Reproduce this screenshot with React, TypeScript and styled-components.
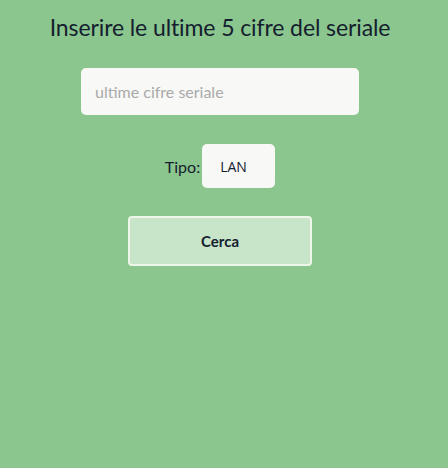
import styled, { createGlobalStyle } from 'styled-components';

const GlobalStyle = createGlobalStyle`
    html, body {
        margin: 0;
        padding: 0;
        background: #8bc68e;
    }
    body {
        font-family: Lato, "Open Sans", sans-serif;
        color: #14202e;
    }
`;

const Page = styled.div`
    min-height: 468px;
    display: flex;
    flex-direction: column;
    align-items: center;
    padding: 12px 8px 0 0;
    box-sizing: border-box;
`;

const Title = styled.h1`
    margin: 0;
    font-size: 23px;
    font-weight: 400;
    line-height: 30px;
    letter-spacing: -0.1px;
`;

const SerialInput = styled.input`
    margin-top: 26px;
    width: 278px;
    height: 47px;
    box-sizing: border-box;
    border: none;
    border-radius: 5px;
    background: #f8f8f7;
    padding: 0 14px;
    font-family: Lato, sans-serif;
    font-size: 16px;
    color: #14202e;
    outline: none;
    &::placeholder {
        color: #a9aaa9;
    }
`;

const TypeRow = styled.div`
    margin-top: 29px;
    display: flex;
    align-items: center;
    gap: 2px;
    font-size: 16px;
`;

const TypeSelect = styled.div`
    width: 73px;
    height: 44px;
    box-sizing: border-box;
    border-radius: 5px;
    background: #f8f8f7;
    display: flex;
    align-items: center;
    padding-left: 18px;
    font-family: "Open Sans", sans-serif;
    font-size: 14px;
`;

const SearchButton = styled.button`
    margin-top: 28px;
    width: 184px;
    height: 50px;
    box-sizing: border-box;
    border: 2px solid #eef6ea;
    border-radius: 4px;
    background: #c8e4c9;
    font-family: Lato, sans-serif;
    font-weight: 700;
    font-size: 15px;
    color: #14202e;
    cursor: pointer;
`;

const App = () => {
    return (
        <>
            <GlobalStyle />
            <Page>
                <Title>Inserire le ultime 5 cifre del seriale</Title>
                <SerialInput placeholder="ultime cifre seriale" />
                <TypeRow>
                    <span>Tipo:</span>
                    <TypeSelect>LAN</TypeSelect>
                </TypeRow>
                <SearchButton>Cerca</SearchButton>
            </Page>
        </>
    );
};

export default App;
